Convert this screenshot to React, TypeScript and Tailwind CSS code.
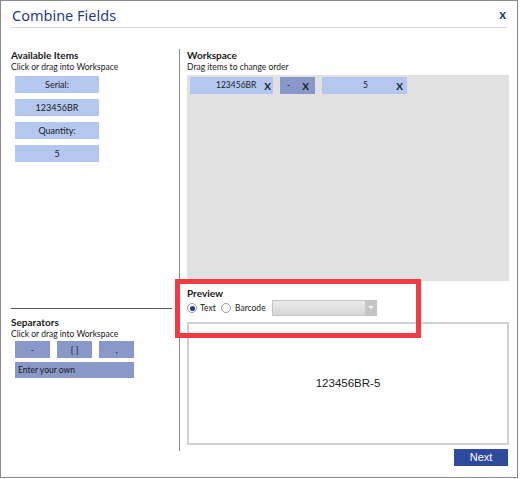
import React from "react";

const ui = { fontFamily: 'Lato, "Noto Sans", sans-serif' };
const arial = { fontFamily: '"Liberation Sans", Arial, sans-serif' };

function ItemBox({ label }: { label: string }) {
  return (
    <div className="ml-[4px] flex h-[17px] w-[84px] items-center justify-center bg-[#b4c7ef] text-[9px] leading-none text-[#1a1a1a]">
      {label}
    </div>
  );
}

function SepBox({ label }: { label: string }) {
  return (
    <div className="flex h-[17px] w-[35px] items-center justify-center bg-[#8a97c9] text-[9px] leading-none text-[#1a1a1a]">
      {label}
    </div>
  );
}

function Radio({ checked }: { checked?: boolean }) {
  return (
    <span className="flex h-[10px] w-[10px] items-center justify-center rounded-full border border-[#9a9a9a] bg-white">
      {checked && <span className="h-[5px] w-[5px] rounded-full bg-[#1f3d8c]" />}
    </span>
  );
}

export default function App() {
  return (
    <div className="bg-white" style={ui}>
      <div className="relative h-[478px] w-[518px] border border-[#8a8a8a] bg-white text-[#1a1a1a]">
        {/* Header */}
        <div className="mx-[10px] flex h-[27px] items-start justify-between border-b border-[#d9d9d9] pt-[4px]">
          <span
            className="pl-[1px] text-[14.5px] leading-[20px] text-[#1f3d8c]"
            style={{ fontFamily: '"Noto Sans", sans-serif' }}
          >
            Combine Fields
          </span>
          <span className="mr-[1px] mt-[3px] text-[13px] font-bold leading-[13px] text-[#1f3d8c]">x</span>
        </div>

        {/* Body */}
        <div className="mt-[21px] flex">
          {/* Left column */}
          <div className="flex w-[178px] flex-col pl-[10px]">
            <div className="text-[10px] font-bold leading-[12px]">Available Items</div>
            <div className="text-[8.5px] leading-[12px]">Click or drag into Workspace</div>
            <div className="mt-[3px] flex flex-col gap-[6px]">
              <ItemBox label="Serial:" />
              <ItemBox label="123456BR" />
              <ItemBox label="Quantity:" />
              <ItemBox label="5" />
            </div>
            <div className="mt-[146px] h-[1px] w-[161px] bg-[#555555]" />
            <div className="mt-[7px] text-[10px] font-bold leading-[12px]">Separators</div>
            <div className="text-[8.5px] leading-[12px]">Click or drag into Workspace</div>
            <div className="ml-[4px] mt-[1px] flex gap-[7px]">
              <SepBox label="-" />
              <SepBox label="{ }" />
              <SepBox label="," />
            </div>
            <div className="ml-[4px] mt-[4px] flex h-[16px] w-[119px] items-center bg-[#8a97c9] pl-[3px] text-[8.5px] leading-none">
              Enter your own
            </div>
          </div>

          {/* Divider */}
          <div className="h-[402px] w-[1px] bg-[#8c8c8c]" />

          {/* Right column */}
          <div className="ml-[7px] flex w-[322px] flex-col">
            <div className="text-[10px] font-bold leading-[12px]">Workspace</div>
            <div className="text-[8.5px] leading-[12px]">Drag items to change order</div>
            <div className="mt-[2px] h-[206px] bg-[#e1e1e1] pl-[3px] pt-[2px]">
              <div className="flex gap-[7px] text-[8.5px] leading-none">
                <div className="flex h-[17px] w-[83px] items-center bg-[#b4c7ef]">
                  <span className="ml-[26px]">123456BR</span>
                  <span className="ml-auto mr-[2px] text-[10px] font-bold">X</span>
                </div>
                <div className="flex h-[17px] w-[35px] items-center bg-[#8a97c9]">
                  <span className="ml-[7px]">-</span>
                  <span className="ml-auto mr-[6px] text-[10px] font-bold">X</span>
                </div>
                <div className="flex h-[17px] w-[85px] items-center bg-[#b4c7ef]">
                  <span className="ml-[41px]">5</span>
                  <span className="ml-auto mr-[4px] text-[10px] font-bold">X</span>
                </div>
              </div>
            </div>

            <div className="mt-[6px] text-[10px] font-bold leading-[12px]">Preview</div>
            <div className="mt-[1px] flex h-[16px] items-center text-[8.5px] leading-none">
              <Radio checked />
              <span className="ml-[3px] w-[21px]">Text</span>
              <Radio />
              <span className="ml-[4px] w-[37px]">Barcode</span>
              <div className="flex h-[16px] w-[105px] border border-[#c4c4c4] bg-gradient-to-b from-[#ececec] to-[#d6d6d6]">
                <div className="flex-1" />
                <div className="flex w-[11px] items-center justify-center bg-[#c6c6c6]">
                  <svg width="6" height="4" viewBox="0 0 6 4">
                    <path d="M0 0 L6 0 L3 3 Z" fill="#f4f4f4" />
                  </svg>
                </div>
              </div>
            </div>

            <div
              className="mt-[6px] flex h-[123px] items-center justify-center border-2 border-[#d0d0d0] bg-white text-[11.5px] text-[#222222]"
              style={arial}
            >
              123456BR-5
            </div>

            <div className="mt-[4px] flex justify-end pr-[1px]">
              <div
                className="flex h-[17px] w-[54px] items-center justify-center bg-[#2e4a9c] text-[11px] text-white"
                style={arial}
              >
                Next
              </div>
            </div>
          </div>
        </div>

        {/* Red highlight annotation */}
        <div className="pointer-events-none absolute left-[174px] top-[278px] h-[59px] w-[246px] border-[5px] border-[#ef3b41]" />
      </div>
    </div>
  );
}
